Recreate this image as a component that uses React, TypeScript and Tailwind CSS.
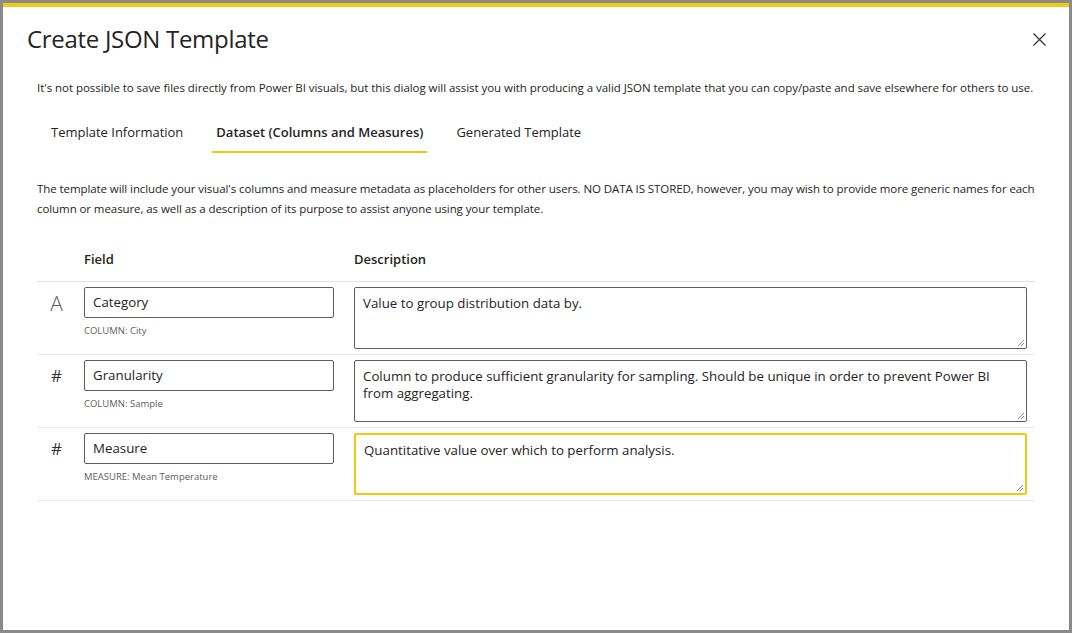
import React from "react";

const rows = [
  { icon: "A", name: "Category", sub: "COLUMN: City", desc: "Value to group distribution data by.", focus: false },
  { icon: "#", name: "Granularity", sub: "COLUMN: Sample", desc: "Column to produce sufficient granularity for sampling. Should be unique in order to prevent Power BI from aggregating.", focus: false },
  { icon: "#", name: "Measure", sub: "MEASURE: Mean Temperature", desc: "Quantitative value over which to perform analysis.", focus: true },
];

function Grip() {
  return (
    <svg className="absolute right-[2px] bottom-[2px]" width="7" height="7" viewBox="0 0 7 7">
      <line x1="1" y1="7" x2="7" y2="1" stroke="#8a8886" strokeWidth="1" />
      <line x1="4" y1="7" x2="7" y2="4" stroke="#8a8886" strokeWidth="1" />
    </svg>
  );
}

export default function App() {
  return (
    <div
      className="w-[1072px] h-[633px] bg-[#8a8a8a] pt-[3px] pl-[3px] pr-[3px] pb-[3px] flex"
      style={{ fontFamily: '"Open Sans", "Noto Sans", sans-serif' }}
    >
      <div className="flex-1 bg-white border-t-4 border-[#f2c811] flex flex-col text-[#252423]">
        <div className="flex items-start justify-between pl-[24px] pr-[22px] pt-[16px]">
          <h1 className="text-[24px] leading-[32px] font-normal tracking-[-0.3px]">Create JSON Template</h1>
          <button className="mt-[8px] w-[16px] h-[16px] flex items-center justify-center">
            <svg width="13" height="13" viewBox="0 0 13 13">
              <path d="M0.5 0.5 L12.5 12.5 M12.5 0.5 L0.5 12.5" stroke="#323130" strokeWidth="1.2" />
            </svg>
          </button>
        </div>
        <div className="px-[34px]">
          <p className="mt-[25px] text-[11.5px] leading-[16px] tracking-[-0.045px] whitespace-nowrap">
            It's not possible to save files directly from Power BI visuals, but this dialog will assist you with producing a valid JSON template that you can copy/paste and save elsewhere for others to use.
          </p>
          <div className="mt-[24px] flex ml-[10px] gap-[25px] text-[13px]">
            <div className="px-[4px] pb-[7px] leading-[24px] border-b-[2px] border-transparent">Template Information</div>
            <div className="px-[4px] pb-[7px] leading-[24px] font-semibold border-b-[2px] border-[#f2c811]">Dataset (Columns and Measures)</div>
            <div className="px-[4px] pb-[7px] leading-[24px] border-b-[2px] border-transparent">Generated Template</div>
          </div>
          <p className="mt-[26px] text-[11.5px] leading-[20px] tracking-[-0.08px]">
            The template will include your visual's columns and measure metadata as placeholders for other users. NO DATA IS STORED, however, you may wish to provide more generic names for each column or measure, as well as a description of its purpose to assist anyone using your template.
          </p>
          <div className="mt-[30px]">
            <div className="flex text-[13px] font-semibold leading-[20px] pb-[12px] border-b border-[#e1dfdd]">
              <div className="w-[47px]" />
              <div className="w-[270px]">Field</div>
              <div>Description</div>
            </div>
            {rows.map((r) => (
              <div key={r.name} className="flex pt-[5px] pb-[5px] border-b border-[#edebe9]">
                <div className="w-[47px] flex justify-center pt-[4px] pr-[8px]">
                  <span className={r.icon === "A" ? "text-[21px] font-light leading-[24px] text-[#605e5c]" : "text-[17px] font-normal leading-[24px] text-[#323130]"}>
                    {r.icon}
                  </span>
                </div>
                <div className="w-[270px]">
                  <div className="w-[250px] h-[31px] border border-[#605e5c] rounded-[2px] px-[8px] flex items-center text-[13.3px]">
                    {r.name}
                  </div>
                  <div className="mt-[7px] text-[9.5px] leading-[12px] text-[#605e5c]">{r.sub}</div>
                </div>
                <div
                  className={
                    "relative w-[673px] h-[62px] rounded-[2px] px-[8px] pt-[7px] text-[13.3px] leading-[17px] " +
                    (r.focus ? "border-2 border-[#f2c811] px-[7px] pt-[6px]" : "border border-[#605e5c]")
                  }
                >
                  {r.desc}
                  <Grip />
                </div>
              </div>
            ))}
          </div>
        </div>
      </div>
    </div>
  );
}
